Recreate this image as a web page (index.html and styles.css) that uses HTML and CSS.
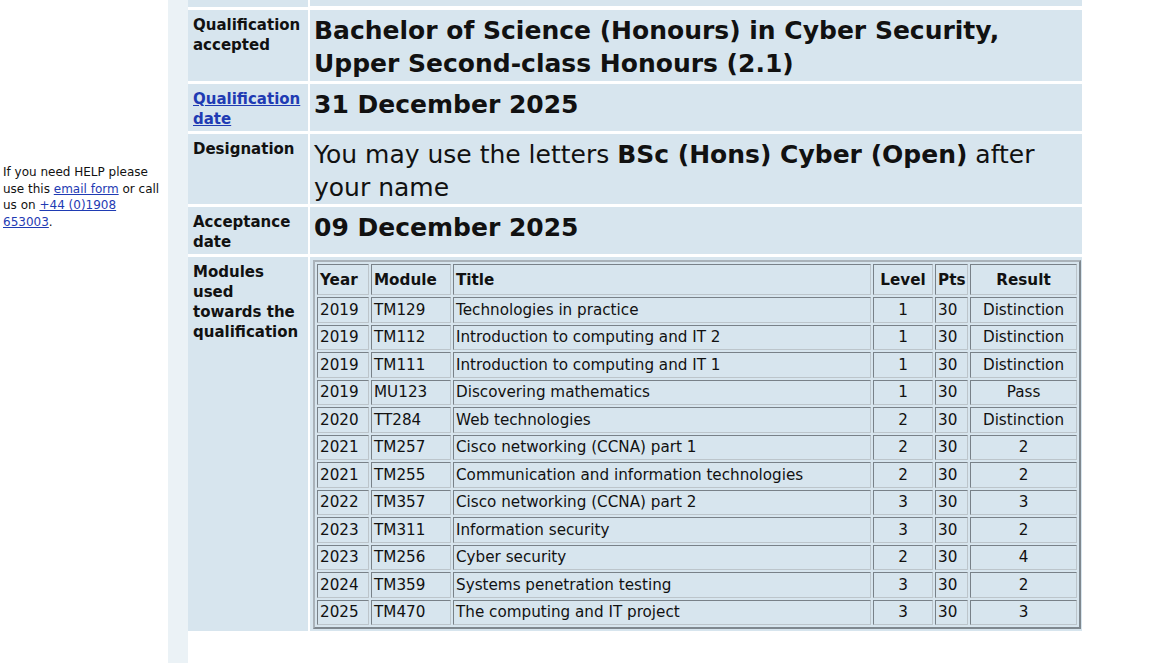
FILE: index.html
```html
<!DOCTYPE html>
<html lang="en">
<head>
<meta charset="utf-8">
<title>Qualification record</title>
<link rel="stylesheet" href="styles.css">
</head>
<body>
<div class="page">
  <aside class="help">If you need HELP please use this <a href="#">email form</a> or call us on <a href="#">+44 (0)1908 653003</a>.</aside>
  <div class="strip"></div>
  <main class="main">
    <div class="record">
      <div class="lab cut"></div><div class="val cut"></div>

      <div class="lab">Qualification accepted</div>
      <div class="val strong">Bachelor of Science (Honours) in Cyber Security, Upper Second-class Honours (2.1)</div>

      <div class="lab"><a href="#">Qualification date</a></div>
      <div class="val strong">31 December 2025</div>

      <div class="lab">Designation</div>
      <div class="val plain">You may use the letters <b>BSc (Hons) Cyber (Open)</b> after your name</div>

      <div class="lab">Acceptance date</div>
      <div class="val strong">09 December 2025</div>

      <div class="lab">Modules used towards the qualification</div>
      <div class="val tablecell">
        <table class="modules">
          <thead>
            <tr>
              <th class="c-year">Year</th>
              <th class="c-mod">Module</th>
              <th class="c-title">Title</th>
              <th class="c-level center">Level</th>
              <th class="c-pts">Pts</th>
              <th class="c-res center">Result</th>
            </tr>
          </thead>
          <tbody>
            <tr><td>2019</td><td>TM129</td><td>Technologies in practice</td><td class="center">1</td><td>30</td><td class="center">Distinction</td></tr>
            <tr><td>2019</td><td>TM112</td><td>Introduction to computing and IT 2</td><td class="center">1</td><td>30</td><td class="center">Distinction</td></tr>
            <tr><td>2019</td><td>TM111</td><td>Introduction to computing and IT 1</td><td class="center">1</td><td>30</td><td class="center">Distinction</td></tr>
            <tr><td>2019</td><td>MU123</td><td>Discovering mathematics</td><td class="center">1</td><td>30</td><td class="center">Pass</td></tr>
            <tr><td>2020</td><td>TT284</td><td>Web technologies</td><td class="center">2</td><td>30</td><td class="center">Distinction</td></tr>
            <tr><td>2021</td><td>TM257</td><td>Cisco networking (CCNA) part 1</td><td class="center">2</td><td>30</td><td class="center">2</td></tr>
            <tr><td>2021</td><td>TM255</td><td>Communication and information technologies</td><td class="center">2</td><td>30</td><td class="center">2</td></tr>
            <tr><td>2022</td><td>TM357</td><td>Cisco networking (CCNA) part 2</td><td class="center">3</td><td>30</td><td class="center">3</td></tr>
            <tr><td>2023</td><td>TM311</td><td>Information security</td><td class="center">3</td><td>30</td><td class="center">2</td></tr>
            <tr><td>2023</td><td>TM256</td><td>Cyber security</td><td class="center">2</td><td>30</td><td class="center">4</td></tr>
            <tr><td>2024</td><td>TM359</td><td>Systems penetration testing</td><td class="center">3</td><td>30</td><td class="center">2</td></tr>
            <tr><td>2025</td><td>TM470</td><td>The computing and IT project</td><td class="center">3</td><td>30</td><td class="center">3</td></tr>
          </tbody>
        </table>
      </div>
    </div>
  </main>
</div>
</body>
</html>
```

FILE: styles.css
```css
* {
  box-sizing: border-box;
}

html, body {
  margin: 0;
  padding: 0;
  background: #ffffff;
}

body {
  font-family: "DejaVu Sans", Verdana, sans-serif;
  color: #000000;
}

a {
  color: #1f3bb3;
  text-decoration: underline;
}

.page {
  display: flex;
  align-items: stretch;
  min-height: 663px;
}

.help {
  width: 168px;
  flex: 0 0 168px;
  padding: 164px 2px 0 3px;
  font-size: 12px;
  line-height: 16.7px;
  color: #111111;
}

.strip {
  width: 20px;
  flex: 0 0 20px;
  background: #ebf2f6;
}

.main {
  flex: 1 1 auto;
}

.record {
  display: grid;
  grid-template-columns: 120px 772px;
  column-gap: 2px;
  row-gap: 3px;
}

.lab,
.val {
  background: #d7e5ee;
}

.cut {
  height: 6px;
}

.lab {
  padding: 5px 3px 2px 5px;
  font-size: 15px;
  line-height: 20px;
  font-weight: bold;
  color: #111111;
}

.lab a {
  color: #1f3bb3;
}

.val {
  padding: 5px 4px 1px 4px;
  font-size: 25px;
  line-height: 32.5px;
  color: #111111;
}

.val.strong {
  font-weight: bold;
}

.val.plain {
  padding-bottom: 0;
}

.val b {
  font-weight: bold;
}

.val.tablecell {
  padding: 3px 0 2px 3px;
  line-height: normal;
}

.modules {
  width: 768px;
  table-layout: fixed;
  border-collapse: separate;
  border-spacing: 2px;
  background: #d7e5ee;
  border-style: solid;
  border-width: 2px;
  border-color: #a9b2b9 #7f888f #7f888f #a9b2b9;
  font-size: 15.2px;
  color: #111111;
}

.modules th,
.modules td {
  border-style: solid;
  border-width: 1px;
  border-color: #788188 #bcc5cb #bcc5cb #788188;
  padding: 0 2px;
  text-align: left;
  vertical-align: middle;
  white-space: nowrap;
  overflow: hidden;
}

.modules th {
  height: 31px;
  font-weight: bold;
}

.modules td {
  height: 25.5px;
  font-weight: normal;
}

.modules .center {
  text-align: center;
}

.c-year { width: 52px; }
.c-mod { width: 80px; }
.c-title { width: 418px; }
.c-level { width: 60px; }
.c-pts { width: 33px; }
.c-res { width: 107px; }
```
